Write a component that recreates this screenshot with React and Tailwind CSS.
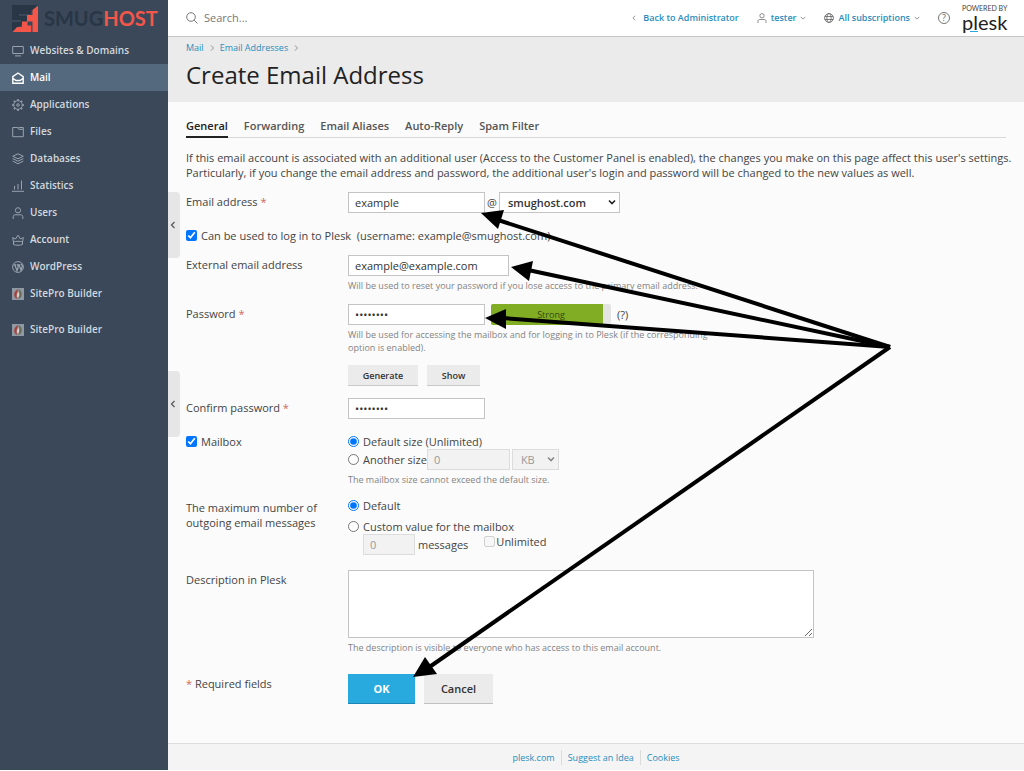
import React from "react";

const arrows = [
  { line: "890,347 498,220", head: "481,213 504,210 498,229" },
  { line: "890,347 528,270", head: "511,267 533,261 529,281" },
  { line: "890,347 502,318", head: "485,318 506,309 506,329" },
  { line: "890,347 428,668", head: "413,677 425,657 437,674" },
];

const icons = {
  monitor: <path d="M.7 1.500h10.600v7H.7zM3 10.900h6" />,
  mail: <path strokeWidth="1.400" d="M.8 4.600 6 1l5.200 3.600v6.600H.8zM.8 6.300 4 8.500h4l3.200-2.200" />,
  gear: (
    <>
      <circle cx="6" cy="6" r="4.300" />
      <circle cx="6" cy="6" r="1.300" />
      <path strokeWidth="1.500" d="M6 0v1.700M6 10.300V12M0 6h1.700M10.300 6H12M1.800 1.800l1 1M9.200 9.200l1 1M1.800 10.200l1-1M9.200 2.800l1-1" />
    </>
  ),
  folder: <path d="M.7 1.500h5l1 1.800h4.600v7.400H.7zM6.500 1.500h4.800v2" />,
  layers: <path d="M6 .8 11.300 3.300 6 5.800.7 3.300zM.7 5.600 6 8.200l5.300-2.600M.7 8 6 10.800 11.300 8" />,
  stats: <path d="M0 11.300h12M2.500 6v3.500M6 4v5.500M9.500.500v9" />,
  user: (
    <>
      <circle cx="6" cy="3.300" r="2.600" />
      <path d="M1.200 12V9.800C1.200 8.500 2 7.800 3.200 7.800h5.600c1.200 0 2 .7 2 2V12" />
    </>
  ),
  crown: <path d="M1.500 8 .7 3.500 3.500 5 6 1.200 8.500 5l2.800-1.500L10.500 8M1.500 8c2.500-1 6.500-1 9 0v2.500c-2.500 1-6.500 1-9 0z" />,
  wordpress: (
    <>
      <circle cx="6" cy="6" r="5.400" />
      <path strokeWidth="1.200" d="M1.800 3.800h2.500M2.800 3.800 5 9.800 6.300 5.800 5.600 3.800h2.500M7 3.800l2 5.500 1.300-4C10.300 4 9.400 3.600 9 2.800" />
    </>
  ),
  globe: (
    <>
      <circle cx="6" cy="6" r="5.300" />
      <ellipse cx="6" cy="6" rx="2.500" ry="5.300" />
      <path d="M1 4.200h10M1 7.800h10" />
    </>
  ),
  search: (
    <>
      <circle cx="5" cy="5" r="4.300" />
      <path d="m8.200 8.200 3.300 3.300" />
    </>
  ),
};

function Icon({ name, className }) {
  return (
    <svg viewBox="0 0 12 12" className={className} fill="none" stroke="currentColor" strokeWidth="1" aria-hidden="true">
      {icons[name]}
    </svg>
  );
}

function SiteProIcon() {
  return (
    <svg viewBox="0 0 12 12" className="size-3 shrink-0" aria-hidden="true">
      <rect width="12" height="12" fill="#8f99a3" />
      <path d="M6.500 1C3.500 2 2 4.500 2.200 7c.2 2.200 1.500 3.600 3.200 4C4 8.500 4.300 5 6.500 1z" fill="#a8403a" />
      <path d="M6.500 1c2.500 1 3.500 3.500 3.200 6-.3 2.300-1.800 3.800-4.300 4C8 9 8 5 6.500 1z" fill="#6d6a55" />
      <path d="M6.300 4C5 6 5 8 5.800 10 7.200 8 7.200 6 6.300 4z" fill="#e8e4dc" />
    </svg>
  );
}

function Chevron({ dir = "down", className }) {
  const d = { down: "M1 2.500 4 5.500 7 2.500", left: "M5.500 1 2.500 4l3 3", right: "M2.500.500 6 4 2.500 7.500" }[dir];
  return (
    <svg viewBox="0 0 8 8" className={className} fill="none" stroke="currentColor" strokeWidth="1.200" aria-hidden="true">
      <path d={d} />
    </svg>
  );
}

function NavItem({ icon, active, children }) {
  return (
    <a
      href="#"
      className={
        active
          ? "flex h-[27px] items-center gap-1.5 bg-[#54697d] pl-3 text-white"
          : "flex h-[27px] items-center gap-1.5 pl-3 text-[#d3d9df]"
      }
    >
      {icon ? (
        <Icon name={icon} className={active ? "size-3 shrink-0" : "size-3 shrink-0 text-[#98a3ae]"} />
      ) : (
        <SiteProIcon />
      )}
      {children}
    </a>
  );
}

const box = "h-[21px] border border-[#c4c4c4] bg-white px-1.5 text-[#333]";
const boxOff = "h-[21px] border border-[#dcdcdc] bg-[#f2f2f2] px-1.5 text-[#999]";
const hint = "text-[9px] leading-[13px] text-[#838383]";
const row = "grid grid-cols-[162px_minmax(0,1fr)]";
const tick = "m-0 size-[11px] shrink-0 accent-[#0075ff]";

function Star() {
  return <span className="text-[#d0695c]">*</span>;
}

function Select({ label, value, className, disabled }) {
  return (
    <span className="relative inline-flex">
      <select aria-label={label} disabled={disabled} className={"appearance-none opacity-100 " + className}>
        <option>{value}</option>
      </select>
      <svg viewBox="0 0 8 8" className={disabled ? "pointer-events-none absolute top-1.5 right-1 size-2 text-[#888]" : "pointer-events-none absolute top-1.5 right-1 size-2 text-[#222]"} fill="none" stroke="currentColor" strokeWidth="1.600" aria-hidden="true">
        <path d="M1 2.500 4 5.500 7 2.500" />
      </svg>
    </span>
  );
}

function Sidebar() {
  return (
    <aside className="w-[168px] shrink-0 bg-[#3a4859] text-[10px] font-semibold">
      <a href="#" aria-label="SmugHost" className="flex h-[37px] items-center gap-1.5 pl-3">
        <svg viewBox="0 0 26 27" className="h-[27px] w-[26px] shrink-0" aria-hidden="true">
          <path d="M0 0h26L19 6v3H7v2h8v5L0 26v-9h9v-2H0z" fill="#283645" />
          <path d="M26 .7V27H.7L5 22h5v-5.500h5V10h5.500V5z" fill="#f4564a" />
          <path d="M15.500 16.500h5V27h-1.200v-6.500h-3.800z" fill="#3a4859" />
        </svg>
        <span className="pb-px font-[Lato] text-[20px] leading-none font-bold text-[#283645]">
          SMUG<span className="text-[#f4564a]">HOST</span>
        </span>
      </a>
      <nav>
        <NavItem icon="monitor">Websites &amp; Domains</NavItem>
        <NavItem icon="mail" active>Mail</NavItem>
        <NavItem icon="gear">Applications</NavItem>
        <NavItem icon="folder">Files</NavItem>
        <NavItem icon="layers">Databases</NavItem>
        <NavItem icon="stats">Statistics</NavItem>
        <NavItem icon="user">Users</NavItem>
        <NavItem icon="crown">Account</NavItem>
        <NavItem icon="wordpress">WordPress</NavItem>
        <NavItem>SitePro Builder</NavItem>
        <div className="mt-[9px]">
          <NavItem>SitePro Builder</NavItem>
        </div>
      </nav>
    </aside>
  );
}

function TopBar() {
  return (
    <header className="flex h-[37px] items-center border-b border-[#c6c6c6] bg-white px-[18px] pb-px">
      <label className="flex flex-1 items-center gap-1.5 text-[#777]">
        <Icon name="search" className="size-3" />
        <input type="search" aria-label="Search" placeholder="Search..." className="w-40 bg-transparent outline-none placeholder:text-[#777]" />
      </label>
      <div className="flex items-center text-[9px] font-semibold text-[#2a8dbd]">
        <a href="#" className="mr-[18px] flex items-center gap-1.5">
          <Chevron dir="left" className="size-1.5 text-[#888]" />
          Back to Administrator
        </a>
        <a href="#" className="mr-[18px] flex items-center gap-1">
          <Icon name="user" className="size-[10px] text-[#777]" />
          tester
          <Chevron className="size-1.5 text-[#888]" />
        </a>
        <a href="#" className="mr-[18px] flex items-center gap-1">
          <Icon name="globe" className="size-[10px] text-[#666]" />
          All subscriptions
          <Chevron className="size-1.5 text-[#888]" />
        </a>
        <button type="button" aria-label="Help" className="mr-3 flex size-3 items-center justify-center rounded-full border border-[#777] text-[9px] leading-none font-normal text-[#666]">
          ?
        </button>
        <a href="#" className="relative flex w-11 flex-col text-[#222]">
          <span className="font-[Lato] text-[7px] leading-[8px] font-normal whitespace-nowrap text-[#444]">POWERED BY</span>
          <span className="font-[Lato] text-[20px] leading-[20px] font-normal">plesk</span>
          <span className="absolute bottom-0 left-2 h-px w-2 bg-[#28aade]" />
        </a>
      </div>
    </header>
  );
}

function Handle({ className }) {
  return (
    <button type="button" aria-label="Collapse" className={"absolute left-0 flex h-[66px] w-3 items-center justify-center rounded-r bg-[#e6e6e6] pr-0.5 text-[#555] " + className}>
      <Chevron dir="left" className="size-2" />
    </button>
  );
}

function EmailForm() {
  return (
    <form className="text-[#444]">
      <div className={row}>
        <label htmlFor="email" className="pt-0.5">Email address <Star /></label>
        <div className="flex items-center">
          <input id="email" defaultValue="example" className={box + " w-[137px]"} />
          <span className="px-[2px]">@</span>
          <Select label="Domain" value="smughost.com" className="h-[21px] w-[121px] border border-[#c4c4c4] bg-white pl-2 font-semibold text-[#333]" />
        </div>
      </div>

      <label className="mt-[15px] flex items-center gap-1">
        <input type="checkbox" defaultChecked className={tick} />
        <span>Can be used to log in to Plesk&nbsp; (username: example@smughost.com)</span>
      </label>

      <div className={row + " mt-3"}>
        <label htmlFor="external" className="pt-0.5">External email address</label>
        <div>
          <input id="external" defaultValue="example@example.com" className={box + " block w-[161px]"} />
          <p className={hint + " mt-[3px]"}>Will be used to reset your password if you lose access to the primary email address.</p>
        </div>
      </div>

      <div className={row + " mt-3"}>
        <label htmlFor="password" className="pt-0.5">Password <Star /></label>
        <div>
          <div className="flex items-center">
            <input id="password" type="password" defaultValue="examples" className={box + " w-[137px]"} />
            <div className="ml-1.5 grid h-[21px] w-[120px] grid-cols-[112px_8px] items-center rounded-xs bg-[#e4e4e4]">
              <div className="col-start-1 row-start-1 h-full rounded-l-xs bg-[#80ad24]" />
              <span className="col-span-2 col-start-1 row-start-1 text-center text-[9px] text-[#354a10]">Strong</span>
            </div>
            <a href="#" className="ml-1.5">(?)</a>
          </div>
          <p className={hint + " mt-[3px] max-w-[370px]"}>
            Will be used for accessing the mailbox and for logging in to Plesk (if the corresponding option is enabled).
          </p>
          <div className="mt-[11px] flex gap-[9px] text-[9px] font-semibold text-[#333]">
            <button type="button" className="h-[21px] w-[70px] border-b border-[#c9c9c9] bg-[#ebebeb]">Generate</button>
            <button type="button" className="h-[21px] w-[53px] border-b border-[#c9c9c9] bg-[#ebebeb]">Show</button>
          </div>
        </div>
      </div>

      <div className={row + " mt-3"}>
        <label htmlFor="confirm" className="pt-0.5">Confirm password <Star /></label>
        <input id="confirm" type="password" defaultValue="examples" className={box + " w-[137px]"} />
      </div>

      <div className={row + " mt-[15px]"}>
        <label className="flex items-center gap-1 self-start">
          <input type="checkbox" defaultChecked className={tick} />
          Mailbox
        </label>
        <div>
          <label className="flex items-center gap-1">
            <input type="radio" name="size" defaultChecked className={tick} />
            Default size (Unlimited)
          </label>
          <div className="flex items-center">
            <label className="flex items-center gap-1">
              <input type="radio" name="size" className={tick} />
              Another size
            </label>
            <input aria-label="Mailbox size" disabled defaultValue="0" className={boxOff + " w-[83px]"} />
            <span className="ml-[2px] inline-flex">
              <Select label="Unit" value="KB" disabled className="h-[21px] w-[47px] border border-[#dcdcdc] bg-[#f2f2f2] pl-2 text-[#999]" />
            </span>
          </div>
          <p className={hint + " mt-[3px]"}>The mailbox size cannot exceed the default size.</p>
        </div>
      </div>

      <div className={row + " mt-3"}>
        <p className="w-36 pt-0.5">The maximum number of outgoing email messages</p>
        <div>
          <label className="flex items-center gap-1">
            <input type="radio" name="limit" defaultChecked className={tick} />
            Default
          </label>
          <label className="mt-1.5 flex items-center gap-1">
            <input type="radio" name="limit" className={tick} />
            Custom value for the mailbox
          </label>
          <div className="flex pl-[15px]">
            <input aria-label="Messages" disabled defaultValue="0" className={boxOff + " w-[52px]"} />
            <span className="ml-[3px] pt-[3px]">messages</span>
            <label className="ml-4 flex items-center gap-px self-start">
              <input type="checkbox" disabled className={tick} />
              Unlimited
            </label>
          </div>
        </div>
      </div>

      <div className={row + " mt-[15px]"}>
        <label htmlFor="description" className="pt-0.5">Description in Plesk</label>
        <div>
          <textarea id="description" className="block h-[68px] w-full max-w-[466px] border border-[#c4c4c4] bg-white" />
          <p className={hint + " mt-[3px]"}>The description is visible to everyone who has access to this email account.</p>
        </div>
      </div>

      <div className={row + " mt-5"}>
        <p className="pt-0.5"><Star /> Required fields</p>
        <div className="flex gap-[9px] font-semibold">
          <button type="submit" className="h-[30px] w-[67px] border-b border-[#1d86b5] bg-[#28aade] font-bold text-white">OK</button>
          <button type="button" className="h-[30px] w-[69px] border-b border-[#c0c0c0] bg-[#ebebeb] text-[#333]">Cancel</button>
        </div>
      </div>
    </form>
  );
}

export default function App() {
  return (
    <div className="relative flex min-h-screen bg-white pb-px font-['Open_Sans',sans-serif] text-[11px] leading-[15px]">
      <Sidebar />
      <div className="relative flex min-w-0 flex-1 flex-col bg-[#fbfbfb]">
        <TopBar />
        <div className="h-[65px] bg-[#ebebeb] px-[18px] pt-[3px]">
          <nav aria-label="Breadcrumb" className="flex items-center gap-[5px] text-[9px] text-[#2a8dbd]">
            <a href="#">Mail</a>
            <Chevron dir="right" className="size-1.5 text-[#888]" />
            <a href="#">Email Addresses</a>
            <Chevron dir="right" className="size-1.5 text-[#888]" />
          </nav>
          <h1 className="mt-1.5 text-[24px] leading-[28px] text-[#222]">Create Email Address</h1>
        </div>
        <main className="flex-1 px-[18px] pt-4">
          <nav aria-label="Sections" className="flex gap-4 border-b border-[#d9d9d9] font-semibold text-[#555]">
            <a href="#" className="-mb-px border-b-2 border-[#222] pb-[3px] text-[#222]">General</a>
            <a href="#">Forwarding</a>
            <a href="#">Email Aliases</a>
            <a href="#">Auto-Reply</a>
            <a href="#">Spam Filter</a>
          </nav>
          <p className="-mr-3 mt-3 mb-3 text-[#444]">
            If this email account is associated with an additional user (Access to the Customer Panel is enabled), the changes you make on this page affect this user's settings. Particularly, if you change the email address and password, the additional user's login and password will be changed to the new values as well.
          </p>
          <EmailForm />
        </main>
        <footer className="flex h-[27px] items-center justify-center border-t border-[#dedede] bg-[#f4f4f4] text-[9px] text-[#2a8dbd]">
          <a href="#" className="px-1.5">plesk.com</a>
          <a href="#" className="border-x border-[#dcdcdc] px-1.5">Suggest an Idea</a>
          <a href="#" className="px-1.5">Cookies</a>
        </footer>
        <Handle className="top-[192px]" />
        <Handle className="top-[371px]" />
      </div>
      <svg viewBox="0 0 1024 771" className="pointer-events-none absolute top-0 left-0 h-[771px] w-[1024px]" aria-hidden="true">
        {arrows.map((a) => (
          <g key={a.head}>
            <polyline points={a.line} fill="none" stroke="#000" strokeWidth="4" />
            <polygon points={a.head} fill="#000" />
          </g>
        ))}
      </svg>
    </div>
  );
}
